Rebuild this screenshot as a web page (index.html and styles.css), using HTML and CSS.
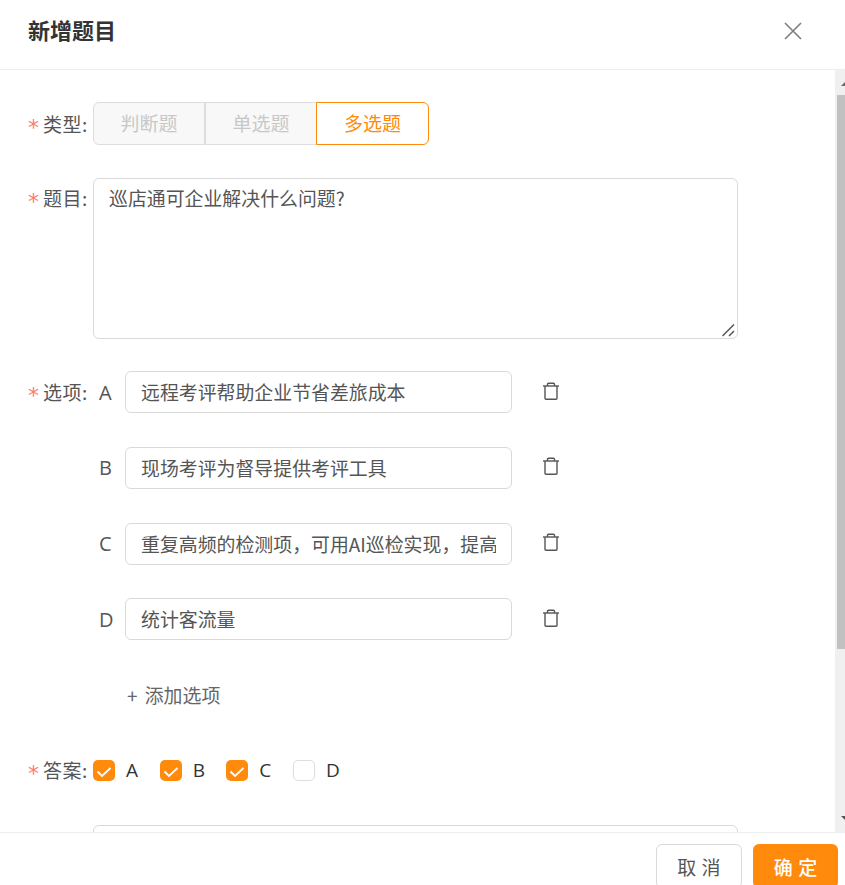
FILE: index.html
```html
<!DOCTYPE html>
<html lang="zh">
<head>
<meta charset="utf-8">
<title>新增题目</title>
<link rel="stylesheet" href="styles.css">
</head>
<body>
<div class="modal">
  <header class="head">
    <h1 class="title">新增题目</h1>
    <svg class="close" width="18" height="18" viewBox="0 0 18 18"><path d="M1 1L17 17M17 1L1 17" stroke="#808080" stroke-width="1.7" fill="none"/></svg>
  </header>
  <div class="middle">
    <main class="content">
      <div class="row row-type">
        <div class="label"><span class="star">*</span>类型:</div>
        <div class="seg">
          <span class="seg-item seg-first">判断题</span>
          <span class="seg-item seg-mid">单选题</span>
          <span class="seg-item seg-on">多选题</span>
        </div>
      </div>
      <div class="row row-q">
        <div class="label label-q"><span class="star">*</span>题目:</div>
        <div class="area">巡店通可企业解决什么问题?
          <svg class="grip" width="14" height="14" viewBox="0 0 14 14"><path d="M0.5 13L12 1.5M7 13L12 8" stroke="#555" stroke-width="1.5" fill="none"/></svg>
        </div>
      </div>
      <div class="options">
        <div class="opt">
          <div class="label"><span class="star">*</span>选项:</div>
          <span class="letter">A</span>
          <div class="field"><span class="field-text">远程考评帮助企业节省差旅成本</span></div>
          <svg class="bin" width="18" height="18" viewBox="0 0 18 18"><use href="#bin"/></svg>
        </div>
        <div class="opt">
          <div class="label"></div>
          <span class="letter">B</span>
          <div class="field"><span class="field-text">现场考评为督导提供考评工具</span></div>
          <svg class="bin" width="18" height="18" viewBox="0 0 18 18"><use href="#bin"/></svg>
        </div>
        <div class="opt">
          <div class="label"></div>
          <span class="letter">C</span>
          <div class="field"><span class="field-text">重复高频的检测项，可用AI巡检实现，提高效率</span></div>
          <svg class="bin" width="18" height="18" viewBox="0 0 18 18"><use href="#bin"/></svg>
        </div>
        <div class="opt">
          <div class="label"></div>
          <span class="letter">D</span>
          <div class="field"><span class="field-text">统计客流量</span></div>
          <svg class="bin" width="18" height="18" viewBox="0 0 18 18"><use href="#bin"/></svg>
        </div>
      </div>
      <div class="add">+ 添加选项</div>
      <div class="row row-ans">
        <div class="label"><span class="star">*</span>答案:</div>
        <div class="checks">
          <span class="check"><span class="box box-on"><svg width="22" height="21" viewBox="0 0 22 21"><path d="M4.5 11.5L9 16L17.5 8" stroke="#fff" stroke-width="1.8" fill="none"/></svg></span>A</span>
          <span class="check"><span class="box box-on"><svg width="22" height="21" viewBox="0 0 22 21"><path d="M4.5 11.5L9 16L17.5 8" stroke="#fff" stroke-width="1.8" fill="none"/></svg></span>B</span>
          <span class="check"><span class="box box-on"><svg width="22" height="21" viewBox="0 0 22 21"><path d="M4.5 11.5L9 16L17.5 8" stroke="#fff" stroke-width="1.8" fill="none"/></svg></span>C</span>
          <span class="check"><span class="box"></span>D</span>
        </div>
      </div>
      <div class="next"></div>
    </main>
    <div class="scrollbar">
      <span class="arrow arrow-up"></span>
      <div class="thumb"></div>
      <span class="arrow arrow-down"></span>
    </div>
  </div>
  <footer class="foot">
    <span class="btn btn-cancel">取 消</span>
    <span class="btn btn-ok">确 定</span>
  </footer>
</div>
<svg class="defs" width="0" height="0"><defs><g id="bin" fill="none" stroke="#555" stroke-width="1.4"><path d="M1 4H17"/><path d="M3 4V16.2C3 16.7 3.4 17.2 4 17.2H14C14.6 17.2 15 16.7 15 16.2V4"/><path d="M5.5 4V2.2C5.5 1.6 5.9 1.2 6.5 1.2H11.5C12.1 1.2 12.5 1.6 12.5 2.2V4"/></g></defs></svg>
</body>
</html>
```
FILE: styles.css
```css
* { box-sizing: border-box; }
html, body { margin: 0; padding: 0; background: #fff; overflow: hidden; }
body { font-family: "Noto Sans CJK SC", "Open Sans", sans-serif; color: #555; }
.modal { width: 845px; height: 885px; display: flex; flex-direction: column; overflow: hidden; }
.defs { position: absolute; }
.head { flex: 0 0 70px; border-bottom: 1px solid #eee; display: flex; align-items: center; justify-content: space-between; padding: 0 43px 12px 28px; }
.title { margin: 0; font-size: 22px; font-weight: 700; color: #333; line-height: 30px; }
.close { display: block; margin-top: 5px; }
.middle { flex: 1; min-height: 0; display: flex; }
.content { flex: 1; min-width: 0; padding: 32px 0 0 28px; overflow: hidden; }
.scrollbar { flex: 0 0 10px; background: #f0f0f0; display: flex; flex-direction: column; align-items: flex-end; overflow: hidden; }
.thumb { width: 8px; height: 554px; background: #c1c1c1; margin-top: 9px; }
.arrow { width: 0; height: 0; border-left: 4px solid transparent; border-right: 4px solid transparent; margin-right: -4px; }
.arrow-up { border-bottom: 4px solid #666; margin-top: 12px; }
.arrow-down { border-top: 4px solid #555; margin-top: auto; margin-bottom: 12px; }
.row { display: flex; font-size: 19px; }
.label { width: 65px; flex: 0 0 65px; display: flex; font-size: 19px; line-height: 26px; letter-spacing: 0.5px; color: #555; white-space: nowrap; }
.star { color: #ff7a70; width: 15px; flex: none; font-family: "DejaVu Sans", sans-serif; font-size: 22px; line-height: 26px; height: 26px; padding-top: 4px; letter-spacing: 0; }
.row-type { align-items: center; height: 43px; }
.seg { display: flex; height: 43px; }
.seg-item { width: 112px; height: 43px; padding-bottom: 3px; display: flex; align-items: center; justify-content: center; border: 1px solid #ddd; background: #f8f8f8; color: #c8c8c8; font-size: 19px; }
.seg-first { border-radius: 6px 0 0 6px; }
.seg-mid { border-left-width: 1px; }
.seg-on { width: 113px; margin-left: -1px; border-color: #ff8a0c; background: #fff; color: #ff8a0c; border-radius: 0 6px 6px 0; }
.row-q { margin-top: 33px; }
.label-q { padding-top: 7px; }
.area { position: relative; width: 645px; height: 161px; border: 1px solid #d9d9d9; border-radius: 6px; padding: 5px 15px; font-size: 18.9px; line-height: 28px; color: #555; }
.grip { position: absolute; right: 1px; bottom: 1px; }
.options { margin-top: 32px; display: flex; flex-direction: column; gap: 33.8px; }
.opt { display: flex; align-items: center; height: 42px; }
.letter { width: 32px; flex: 0 0 32px; font-family: "Open Sans", sans-serif; font-size: 20px; color: #555; padding-left: 6px; }
.field { width: 387px; height: 42px; border: 1px solid #d9d9d9; border-radius: 6px; padding: 0 15px; line-height: 40px; font-size: 18.9px; color: #555; }
.field-text { display: block; overflow: hidden; white-space: nowrap; }
.bin { margin-left: 30px; margin-top: -3px; }
.add { margin: 41px 0 0 99px; font-size: 18.9px; line-height: 28px; color: #666; word-spacing: 3px; }
.row-ans { margin-top: 47px; align-items: center; height: 28px; }
.checks { display: flex; gap: 20.67px; }
.check { display: flex; align-items: center; width: 46px; font-family: "Open Sans", sans-serif; font-size: 19px; color: #333; gap: 11px; }
.box { width: 22px; height: 21px; flex: none; border: 1px solid #ddd; border-radius: 5px; background: #fff; display: flex; align-items: center; justify-content: center; }
.box-on { background: #ff8a0c; border: 0; }
.next { width: 645px; height: 60px; margin: 41px 0 0 65px; border: 1px solid #d9d9d9; border-radius: 6px; }
.foot { flex: 0 0 53px; min-height: 0; overflow: hidden; border-top: 1px solid #eee; display: flex; justify-content: flex-end; gap: 11px; padding: 11px 7px 0 0; }
.btn { width: 86px; height: 44px; flex: none; display: flex; align-items: center; justify-content: center; border-radius: 6px; font-size: 19px; word-spacing: 1px; }
.btn-cancel { border: 1px solid #d9d9d9; color: #555; }
.btn-ok { width: 85px; background: #ff8a0c; color: #fff; font-weight: 500; }
```
